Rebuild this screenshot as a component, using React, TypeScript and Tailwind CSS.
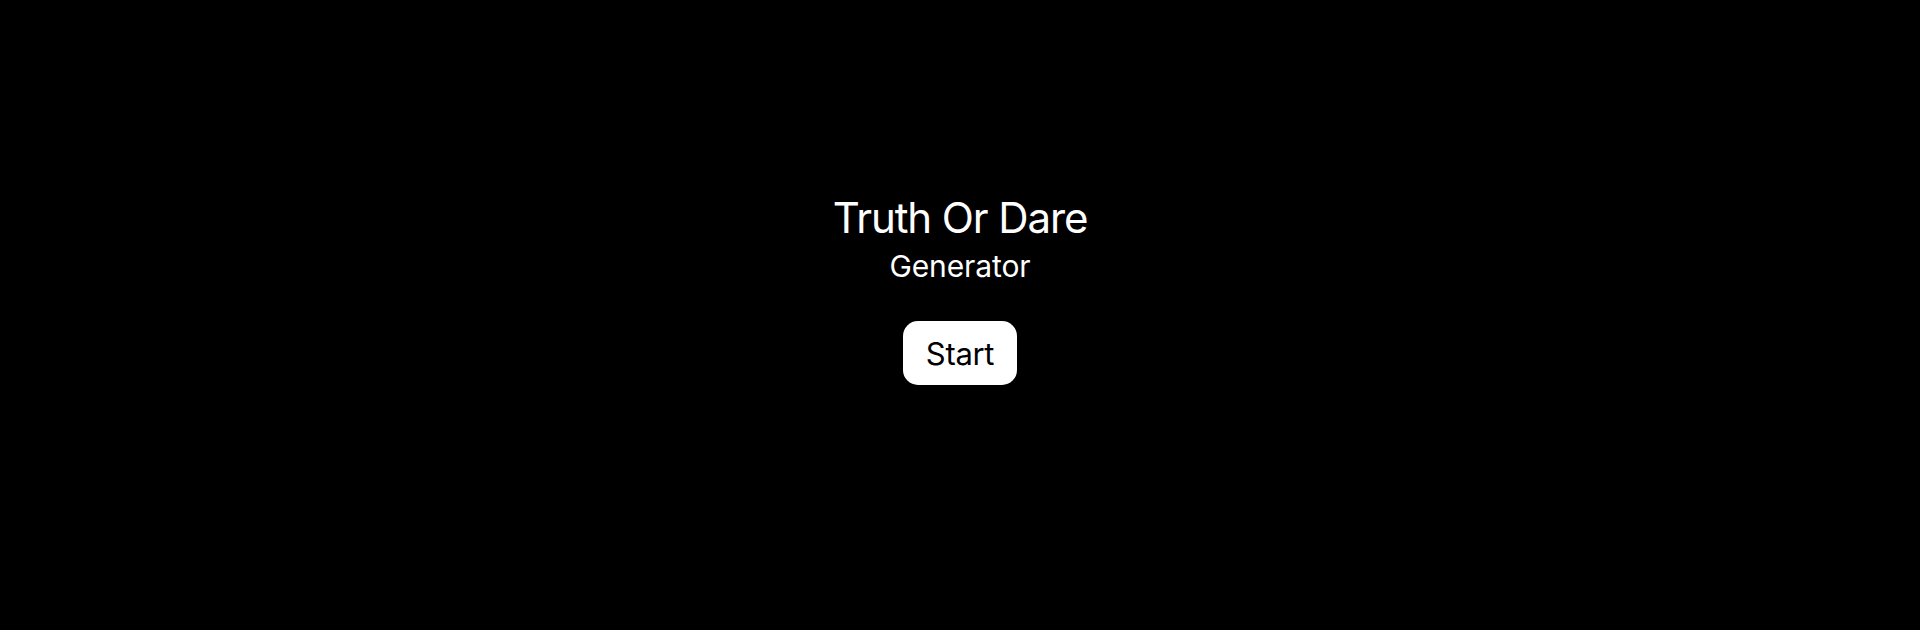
export default function App() {
  return (
    <div className="w-full h-[630px] bg-black flex flex-col items-center pt-[192px] text-white" style={{ fontFamily: 'Inter, "Noto Sans", sans-serif' }}>
      <h1 className="text-[42px] leading-[52px] font-normal tracking-[-1.1px]">Truth Or Dare</h1>
      <h2 className="mt-[4px] text-[30px] leading-[36px] font-normal tracking-[-0.1px]">Generator</h2>
      <button className="mt-[37px] bg-white text-black rounded-[15px] h-[64px] px-[23px] text-[31px] leading-none tracking-[-0.3px]">Start</button>
    </div>
  );
}
